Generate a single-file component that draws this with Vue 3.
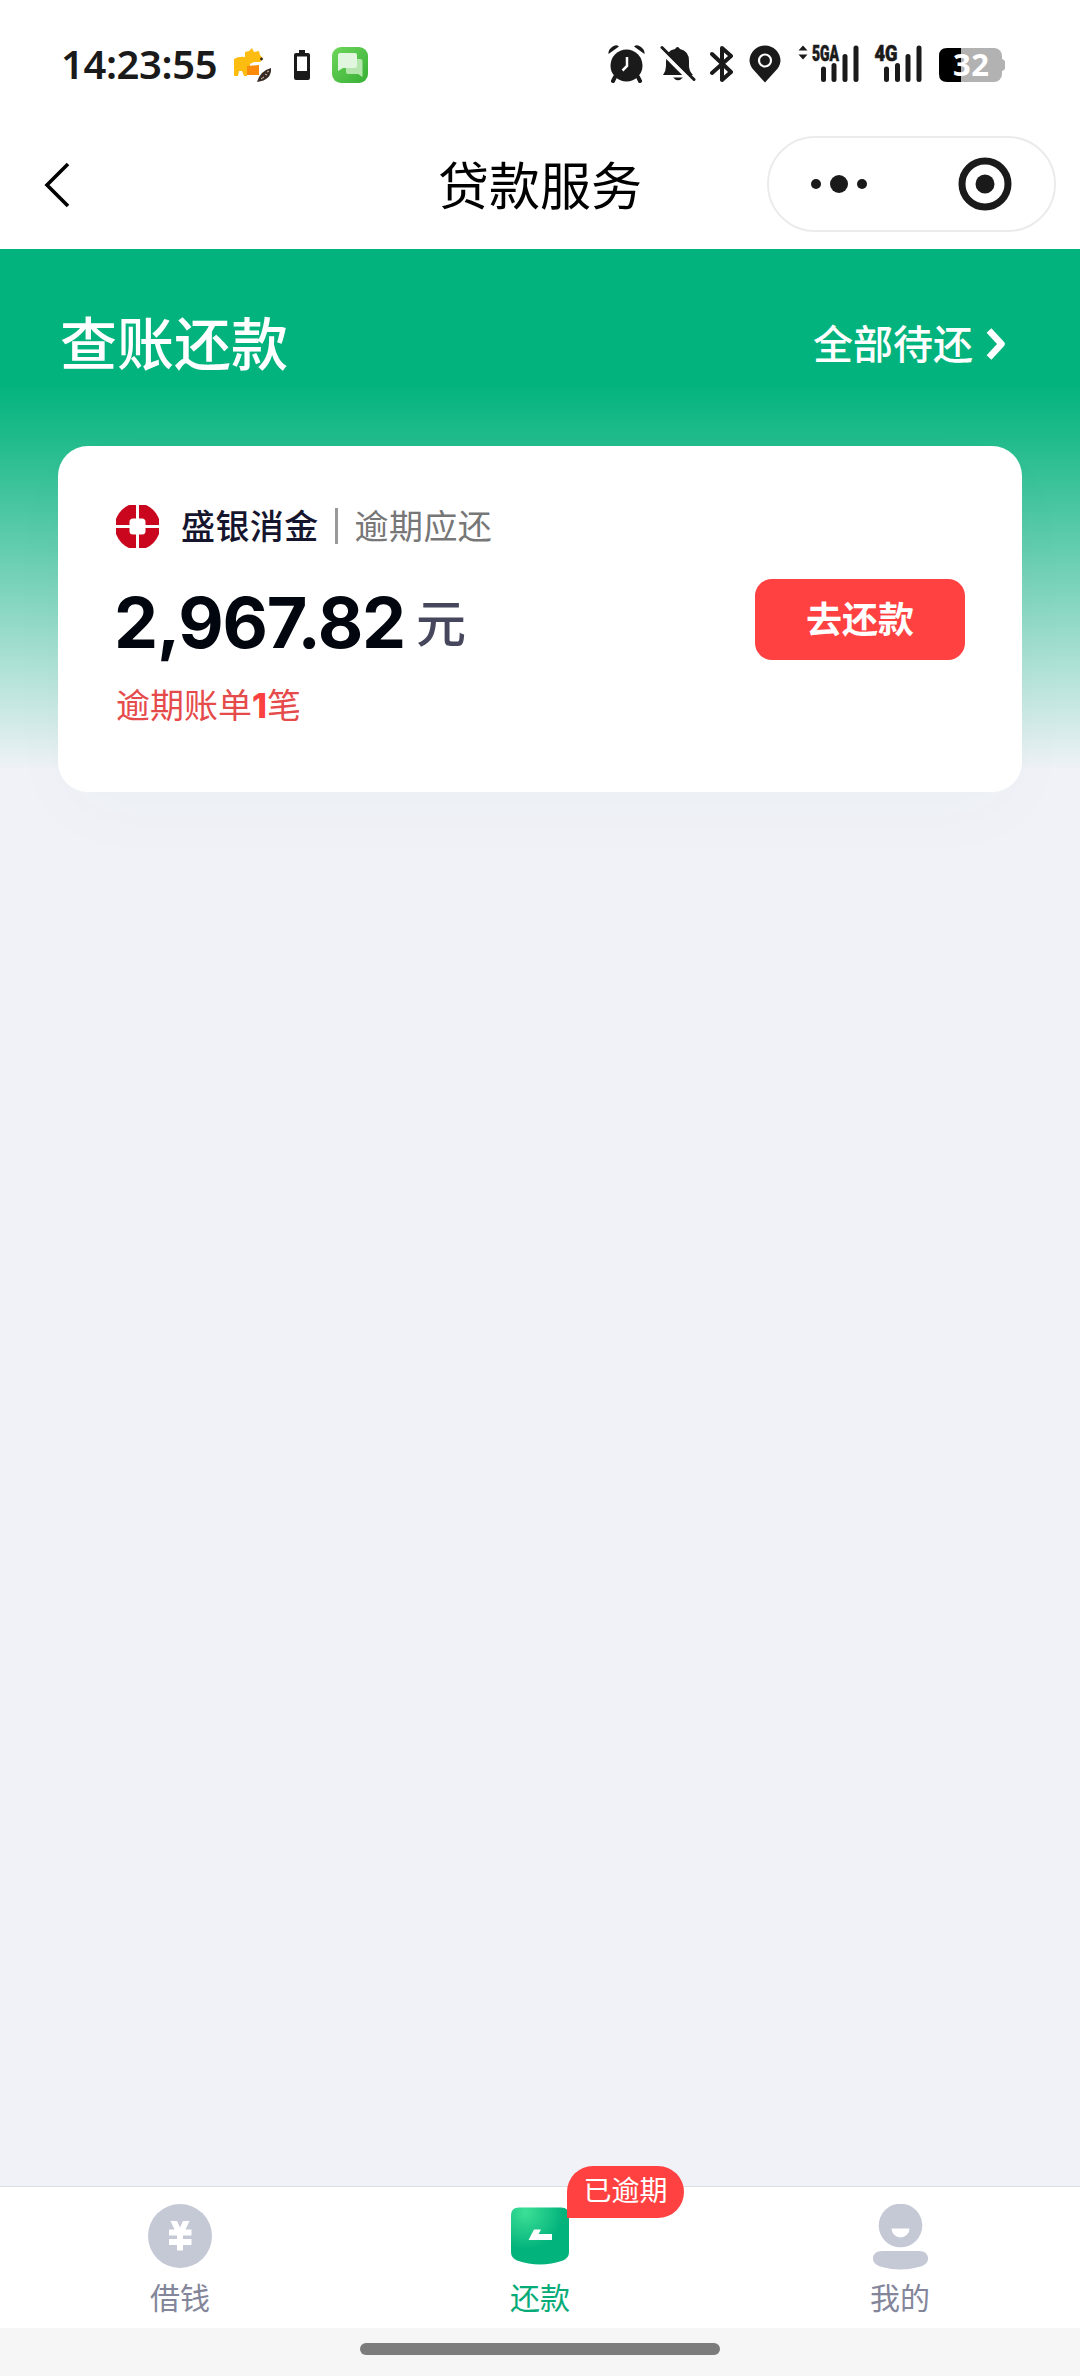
<template>
  <div class="page">
    <header class="status-bar">
      <div class="status-left">
        <span class="clock">14:23:55</span>
        <svg class="ic-camel" width="40" height="40" viewBox="0 0 40 40">
          <path d="M1 11 Q6 8 12 9 V4 L16 3 L19 0 L21 4 L26 3 L27 7 Q30 9 29 12 L27 14 H21 L17 16 V21 L14 23 V28 H11 L9 23 H6 L5 28 H1 Z" fill="#fdbd10" />
          <path d="M14 18 L26 17 V27 H14 Z" fill="#fb8a09" />
          <circle cx="28.500" cy="11" r="1.400" fill="#3a2712" />
          <path d="M38 20 Q39 32 24 34 Q27 23 38 20 Z" fill="#3a2a25" />
          <path d="M28 31 l3 -2 m1 -3 l2 1 m0 -3 l2 -1" stroke="#d6c4ba" stroke-width="1" fill="none" />
        </svg>
        <svg class="ic-cell" width="16" height="30" viewBox="0 0 16 30">
          <path d="M5 0 H11 V3 H14 Q16 3 16 5 V28 Q16 30 14 30 H2 Q0 30 0 28 V5 Q0 3 2 3 H5 Z" fill="#1a1a1a" />
          <rect x="3" y="6.500" width="10" height="14.500" fill="#fff" />
        </svg>
        <svg class="ic-chat" width="36" height="36" viewBox="0 0 36 36">
          <defs>
            <linearGradient id="chatBg" x1="0" y1="0" x2="1" y2="1">
              <stop offset="0" stop-color="#6fd65c" />
              <stop offset="1" stop-color="#36b035" />
            </linearGradient>
          </defs>
          <rect width="36" height="36" rx="9" fill="url(#chatBg)" />
          <path d="M14 12 H28 Q30.500 12 30.500 14 V30 L26 27 H16 Q14 27 14 25 Z" fill="#b4e6ae" />
          <path d="M8 6 H23 Q25 6 25 8 V19 Q25 21 23 21 H11 L6 24 V8 Q6 6 8 6 Z" fill="#e2f6df" />
        </svg>
      </div>
      <div class="status-right">
        <svg class="ic-alarm" width="37" height="38" viewBox="0 0 37 38">
          <circle cx="18.500" cy="20.500" r="16" fill="#1a1a1a" />
          <path d="M7 32 L5 36 M30 32 L32 36" stroke="#1a1a1a" stroke-width="4" stroke-linecap="round" />
          <path d="M0.500 9 Q0 5 4 2 Q8 -1 11 1.500 Z M36.500 9 Q37 5 33 2 Q29 -1 26 1.500 Z" fill="#1a1a1a" />
          <path d="M19 12 V21 L14.500 25.500" stroke="#fff" stroke-width="2.500" fill="none" />
        </svg>
        <svg class="ic-bell" width="36" height="38" viewBox="0 0 36 38">
          <path d="M3 30 Q6 26 6 21 V17 Q6 5 15 4 Q17.500 0 20 4 Q29 6 29 16 V21 Q29 26 33 30 Z" fill="#1a1a1a" />
          <path d="M13 32.500 H23 Q18 38 13 32.500 Z" fill="#1a1a1a" />
          <path d="M-1 4 L32 37" stroke="#fff" stroke-width="4" />
          <path d="M2 2.500 L34 34.500" stroke="#1a1a1a" stroke-width="3" stroke-linecap="round" />
        </svg>
        <svg class="ic-bt" width="24" height="38" viewBox="0 0 24 38">
          <path d="M2 9 L21 27 L12 35 V3 L21 11 L2 28" stroke="#1a1a1a" stroke-width="4" stroke-linejoin="round" stroke-linecap="round" fill="none" />
        </svg>
        <svg class="ic-pin" width="32" height="38" viewBox="0 0 32 38">
          <path d="M16 0.500 A15.500 15.500 0 0 1 31.500 16 Q31 22 25.500 27 L16 37.500 L6.500 27 Q1 22 0.500 16 A15.500 15.500 0 0 1 16 0.500 Z" fill="#1a1a1a" />
          <circle cx="16" cy="15.500" r="6" stroke="#fff" stroke-width="2.200" fill="none" />
        </svg>
        <svg class="ic-net" width="62" height="48" viewBox="0 -10 62 48">
          <path d="M0.500 5.500 L5 0.500 L9.500 5.500 Z M0.500 9.500 H9.500 L5 14.500 Z" fill="#1a1a1a" />
          <text x="14" y="16" class="net-text" textLength="27" lengthAdjust="spacingAndGlyphs">5GA</text>
          <path d="M25.500 24 V34.500 M36 20.500 V34.500 M47 11.500 V34.500 M58 3 V34.500" stroke="#1a1a1a" stroke-width="5" stroke-linecap="round" />
        </svg>
        <svg class="ic-net4" width="48" height="48" viewBox="0 -10 48 48">
          <text x="0.500" y="16" class="net-text" textLength="23" lengthAdjust="spacingAndGlyphs">4G</text>
          <path d="M12.500 24 V34.500 M23.500 20.500 V34.500 M34 11.500 V34.500 M45 3 V34.500" stroke="#1a1a1a" stroke-width="5" stroke-linecap="round" />
        </svg>
        <svg class="ic-battery" width="66" height="44" viewBox="0 -4 66 44">
          <rect x="10" y="1" width="53" height="34" rx="8" fill="#b2b2b2" />
          <path d="M62 11 L66 14 V22 L62 25 Z" fill="#b2b2b2" />
          <path d="M8 1 H22 V35 H8 Q0 35 0 27 V9 Q0 1 8 1 Z" fill="#000" />
          <text x="14" y="29" class="battery-text" textLength="36">32</text>
        </svg>
      </div>
    </header>

    <nav class="nav-bar">
      <div class="nav-side">
        <svg class="back" width="26" height="46" viewBox="0 0 26 46">
          <path d="M24 2 L3 23 L24 44" stroke="#000" stroke-width="3.600" fill="none" />
        </svg>
      </div>
      <h1 class="nav-title">贷款服务</h1>
      <div class="nav-side nav-right">
        <div class="capsule">
          <svg class="dots" width="56" height="20" viewBox="0 0 56 20">
            <circle cx="5" cy="10" r="5" fill="#1a1a1a" />
            <circle cx="28" cy="10" r="9" fill="#1a1a1a" />
            <circle cx="51" cy="10" r="5" fill="#1a1a1a" />
          </svg>
          <span class="capsule-line"></span>
          <svg class="target" width="54" height="54" viewBox="0 0 54 54">
            <circle cx="27" cy="27" r="23" stroke="#1a1a1a" stroke-width="7" fill="none" />
            <circle cx="27" cy="27" r="9.500" fill="#1a1a1a" />
          </svg>
        </div>
      </div>
    </nav>

    <main class="content">
      <div class="section-head">
        <h2 class="section-title">查账还款</h2>
        <a class="all-link">
          <span>全部待还</span>
          <svg width="20" height="32" viewBox="0 0 20 32">
            <path d="M3 2.500 L15.500 16 L3 29.500" stroke="#fff" stroke-width="6.500" fill="none" stroke-linejoin="round" />
          </svg>
        </a>
      </div>

      <section class="card">
        <div class="card-info">
          <div class="lender">
            <svg class="lender-logo" width="43" height="43" viewBox="0 0 43 43">
              <path d="M13 0 H30 Q39 4 43 14 V29 Q39 39 30 43 H13 Q4 39 0 29 V14 Q4 4 13 0 Z" fill="#c9061d" />
              <path d="M21.500 0 V43 M0 21.500 H43" stroke="#fff" stroke-width="3" />
              <rect x="13.500" y="13.500" width="16" height="16" rx="3.500" fill="#fff" />
            </svg>
            <span class="lender-name">{{ bill.lender }}</span>
            <span class="lender-line"></span>
            <span class="lender-status">{{ bill.status }}</span>
          </div>
          <div class="amount">
            <span class="amount-num">{{ bill.amount }}</span>
            <span class="amount-unit">元</span>
          </div>
          <div class="overdue">逾期账单<b>{{ bill.count }}</b>笔</div>
        </div>
        <button class="pay-btn">去还款</button>
      </section>
    </main>

    <footer class="tab-bar">
      <div v-for="tab in tabs" :key="tab.name" class="tab" :class="{ active: tab.name === current }" @click="current = tab.name">
        <div class="tab-icon">
          <svg v-if="tab.name === 'borrow'" width="64" height="64" viewBox="0 0 64 64">
            <circle cx="32" cy="32" r="32" fill="#c5c9d6" />
            <path d="M22.500 17 H29 L32 23.500 L35 17 H41.500 L37.500 25.500 H43.500 V31.500 H35 V35 H43.500 V41 H35 V46.500 H29 V41 H21 V35 H29 V31.500 H21 V25.500 H26.500 Z" fill="#fff" />
          </svg>
          <svg v-else-if="tab.name === 'repay'" width="64" height="64" viewBox="0 0 64 64">
            <defs>
              <radialGradient id="repayBg" cx="0.250" cy="0.080" r="0.650">
                <stop offset="0" stop-color="#3de096" />
                <stop offset="1" stop-color="#03b37c" />
              </radialGradient>
            </defs>
            <path d="M11 3.500 H53 Q61 3.500 61 11.500 V48 Q61 54 55 56.500 Q32 64.500 9 56.500 Q3 54 3 48 V11.500 Q3 3.500 11 3.500 Z" fill="url(#repayBg)" />
            <path d="M26 25.500 H33 L30.500 30 H44 V36 H20.500 Z" fill="#fff" />
          </svg>
          <svg v-else width="64" height="66" viewBox="0 0 64 66">
            <circle cx="32.500" cy="21.500" r="21.800" fill="#c5c9d6" />
            <path d="M23.500 24.500 H41.500 A9 9 0 0 1 23.500 24.500 Z" fill="#fff" />
            <path d="M14 47 H51 Q60 47 60 55 Q60 60 53 62.500 Q32 68.500 12 62.500 Q5 60 5 55 Q5 47 14 47 Z" fill="#c5c9d6" />
          </svg>
          <span v-if="tab.badge" class="badge">{{ tab.badge }}</span>
        </div>
        <span class="tab-label">{{ tab.label }}</span>
      </div>
    </footer>
    <div class="home-area">
      <div class="home-indicator"></div>
    </div>
  </div>
</template>

<script setup>
import { ref } from 'vue';

const current = ref('repay');

const bill = {
  lender: '盛银消金',
  status: '逾期应还',
  amount: '2,967.82',
  count: 1
};

const tabs = [
  { name: 'borrow', label: '借钱' },
  { name: 'repay', label: '还款', badge: '已逾期' },
  { name: 'mine', label: '我的' }
];
</script>

<style>
body {
  margin: 0;
  background: #f0f2f7;
}
</style>

<style scoped>
.page {
  width: 1080px;
  height: 2376px;
  display: flex;
  flex-direction: column;
  overflow: hidden;
  background: #f0f2f7;
  font-family: "Noto Sans", "Noto Sans CJK SC", sans-serif;
}

svg {
  display: block;
  flex-shrink: 0;
}

.status-bar {
  height: 128px;
  box-sizing: border-box;
  padding: 0 75px 0 61px;
  background: #fff;
  display: flex;
  justify-content: space-between;
  align-items: center;
}

.status-left,
.status-right {
  display: flex;
  align-items: center;
}

.clock {
  width: 172px;
  font-size: 40px;
  line-height: 48px;
  font-weight: 600;
  letter-spacing: -0.4px;
  color: #1a1a1a;
  white-space: nowrap;
}

.ic-camel {
  margin-top: 8px;
}

.ic-cell {
  margin-left: 21px;
  margin-top: 2px;
}

.ic-chat {
  margin-left: 22px;
  margin-top: 2px;
}

.ic-bell {
  margin-left: 15px;
}

.ic-bt {
  margin-left: 14px;
}

.ic-pin {
  margin-left: 15px;
}

.ic-net {
  margin: -10px 0 0 17px;
}

.ic-net4 {
  margin: -10px 0 0 14px;
}

.ic-battery {
  margin-left: 17px;
  margin-top: 2px;
}

.net-text {
  font-family: Roboto, sans-serif;
  font-size: 22px;
  font-weight: 900;
  fill: #1a1a1a;
  stroke: #1a1a1a;
  stroke-width: 0.6px;
}

.battery-text {
  font-size: 31px;
  font-weight: 700;
  fill: #fff;
}

.nav-bar {
  height: 121px;
  background: #fff;
  display: flex;
  align-items: center;
}

.nav-side {
  flex: 1;
  display: flex;
}

.back {
  margin: -8px 0 0 44px;
}

.nav-title {
  margin: -7px 0 0;
  font-size: 51px;
  line-height: 70px;
  font-weight: 400;
  color: #000;
}

.nav-right {
  justify-content: flex-end;
}

.capsule {
  width: 289px;
  height: 96px;
  box-sizing: border-box;
  margin: -9px 24px 0 0;
  padding: 0 43px 0 42px;
  border: 2px solid #ebebeb;
  border-radius: 48px;
  display: flex;
  align-items: center;
}

.capsule-line {
  width: 1px;
  height: 57px;
  margin-left: 44px;
  background: #e2e2e2;
}

.target {
  margin-left: 47px;
}

.content {
  flex: 1;
  background: linear-gradient(to bottom, #02b37d 0, #02b37d 135px, #20bb8b 190px, #60ccae 295px, #c3e7e0 450px, #f0f2f7 522px);
}

.section-head {
  height: 197px;
  box-sizing: border-box;
  padding: 0 74px 9px 60px;
  display: flex;
  align-items: center;
  justify-content: space-between;
  color: #fff;
}

.section-title {
  margin: 0;
  font-size: 57px;
  line-height: 80px;
  font-weight: 500;
}

.all-link {
  display: flex;
  align-items: center;
  gap: 13px;
  margin-top: 2px;
  font-size: 40px;
  line-height: 56px;
  font-weight: 500;
}

.card {
  height: 346px;
  box-sizing: border-box;
  margin: 0 58px;
  padding: 50px 57px 0 58px;
  border-radius: 30px;
  background: #fff;
  box-shadow: 0 24px 80px rgba(70, 80, 110, 0.02);
  display: flex;
  justify-content: space-between;
  align-items: flex-start;
}

.lender {
  height: 60px;
  display: flex;
  align-items: center;
  font-size: 34px;
  line-height: 50px;
  letter-spacing: 0.4px;
}

.lender-name {
  margin-left: 22px;
  font-weight: 500;
  color: #15162e;
}

.lender-line {
  width: 3px;
  height: 36px;
  margin: 0 17px 0 16px;
  background: #999;
}

.lender-status {
  color: #777;
}

.amount {
  height: 100px;
  margin-top: 17px;
  display: flex;
  align-items: center;
}

.amount-num {
  margin-left: -2px;
  font-family: Inter, sans-serif;
  font-size: 70px;
  line-height: 100px;
  font-weight: 700;
  letter-spacing: -1.2px;
  color: #02060e;
}

.amount-unit {
  margin-left: 11px;
  font-size: 50px;
  line-height: 70px;
  font-weight: 500;
  color: #46475d;
}

.overdue {
  margin-top: 7px;
  font-size: 34px;
  line-height: 50px;
  color: #e64b4b;
}

.overdue b {
  font-family: Inter, sans-serif;
  font-weight: 800;
  color: #fc3f3f;
}

.pay-btn {
  width: 210px;
  height: 81px;
  margin: 83px 0 0;
  padding: 0 0 4px;
  border: none;
  border-radius: 17px;
  background: #ff4141;
  color: #fff;
  font-family: inherit;
  font-size: 36px;
  font-weight: 700;
}

.tab-bar {
  height: 142px;
  box-sizing: border-box;
  border-top: 1px solid #dcdfe1;
  background: #fff;
  display: grid;
  grid-template-columns: repeat(3, 1fr);
}

.tab {
  display: flex;
  flex-direction: column;
  align-items: center;
  color: #83869a;
}

.tab-icon {
  position: relative;
  height: 66px;
  margin-top: 17px;
}

.tab-label {
  margin-top: 6px;
  font-size: 30px;
  line-height: 44px;
}

.tab.active {
  color: #07ab78;
}

.badge {
  position: absolute;
  left: 59px;
  top: -38px;
  width: 117px;
  height: 52px;
  box-sizing: border-box;
  border-radius: 26px 26px 26px 0;
  background: #ff4141;
  color: #fff;
  font-size: 28px;
  line-height: 48px;
  text-align: center;
  white-space: nowrap;
}

.home-area {
  height: 48px;
  box-sizing: border-box;
  padding-top: 15px;
  background: #f6f6f6;
}

.home-indicator {
  width: 360px;
  height: 12px;
  margin: 0 auto;
  border-radius: 6px;
  background: #7c7c7c;
}
</style>
